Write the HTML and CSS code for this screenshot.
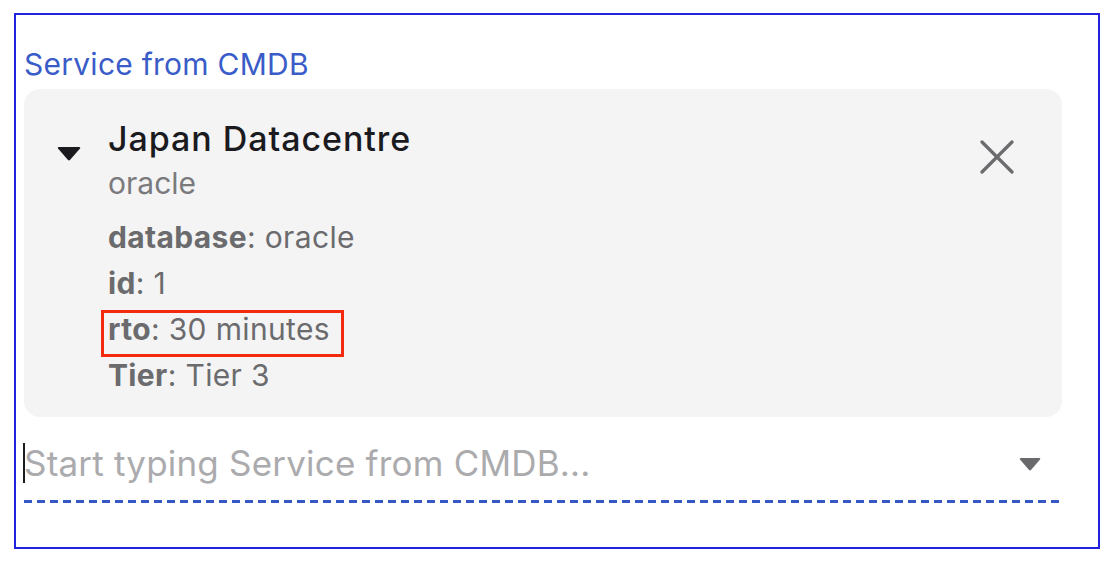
FILE: index.html
```html
<!DOCTYPE html>
<html lang="en">
<head>
    <meta charset="UTF-8">
    <meta name="viewport" content="width=device-width, initial-scale=1.0">
    <title>Service from CMDB</title>
    <link rel="stylesheet" href="styles.css">
</head>
<body>

    <div class="frame">
        <div class="field-label">Service from CMDB</div>

        <div class="card">
            <div class="toggle">
                <svg width="24" height="14" viewBox="0 0 24 14"><path d="M1 1.5 Q0 0 2 0 H22 Q24 0 23 1.5 L13.2 12.8 Q12 14 10.8 12.8 Z" fill="#1b1b1f"/></svg>
            </div>
            <div class="card-body">
                <div class="card-title">Japan Datacentre</div>
                <div class="card-sub">oracle</div>
                <div class="props">
                    <div class="prop"><b>database</b>: oracle</div>
                    <div class="prop"><b>id</b>: 1</div>
                    <div class="prop"><span class="highlight"><b>rto</b>: 30 minutes</span></div>
                    <div class="prop"><b>Tier</b>: Tier 3</div>
                </div>
            </div>
            <button class="remove" title="Remove">
                <svg width="34" height="34" viewBox="0 0 34 34"><path d="M2 2 L32 32 M32 2 L2 32" stroke="#6b6b6e" stroke-width="3.2" stroke-linecap="round"/></svg>
            </button>
        </div>

        <div class="search">
            <span class="caret"></span>
            <span class="placeholder">Start typing Service from CMDB...</span>
            <svg class="drop" width="22" height="13" viewBox="0 0 22 13"><path d="M1 1.5 Q0 0 2 0 H20 Q22 0 21 1.5 L12.2 11.8 Q11 13 9.8 11.8 Z" fill="#6a6a6d"/></svg>
        </div>
        <div class="underline"></div>
    </div>

</body>
</html>
```

FILE: styles.css
```css
body { margin: 0; font-family: Inter, "Noto Sans", sans-serif; background-color: #fff; }
.frame { margin: 13px 0 0 14px; width: 1086px; height: 536px; border: 2px solid #2323dd; padding: 29px 36px 0 8px; box-sizing: border-box; }
.field-label { font-size: 30px; line-height: 40px; color: #3a5cc8; margin-bottom: 5px; letter-spacing: 0.25px; }
.card { display: flex; align-items: flex-start; background-color: #f4f4f5; border-radius: 16px; padding: 20px 48px 19px 33px; }
.toggle { width: 24px; padding-top: 38px; margin-right: 27px; }
.toggle svg { display: block; }
.card-body { flex: 1; }
.card-title { font-size: 34px; font-weight: 500; line-height: 60px; color: #1b1b1f; letter-spacing: 0.95px; }
.card-sub { font-size: 30px; line-height: 28px; color: #7a7a7d; margin-bottom: 17px; }
.prop { font-size: 30px; line-height: 46px; color: #6b6b6e; letter-spacing: 0.35px; }
.prop b { font-weight: 700; }
.highlight { position: relative; display: inline-block; }
.highlight::after { content: ''; position: absolute; left: -7px; right: -14px; top: 4px; bottom: -5px; border: 3.5px solid #f42a0e; }
.remove { background: none; border: none; padding: 0; margin-top: 31px; cursor: pointer; }
.remove svg { display: block; }
.search { display: flex; align-items: center; height: 72px; margin-top: 10px; }
.caret { width: 2px; height: 40px; background-color: #1b1b1f; margin-left: -1px; }
.placeholder { flex: 1; font-size: 35px; color: #ababae; margin-left: -1px; letter-spacing: 0.2px; }
.drop { margin-right: 21px; margin-top: 2px; }
.underline { height: 3px; margin-top: 1px; background: repeating-linear-gradient(to right, #3558c4 0 8px, transparent 8px 13px); }
```
